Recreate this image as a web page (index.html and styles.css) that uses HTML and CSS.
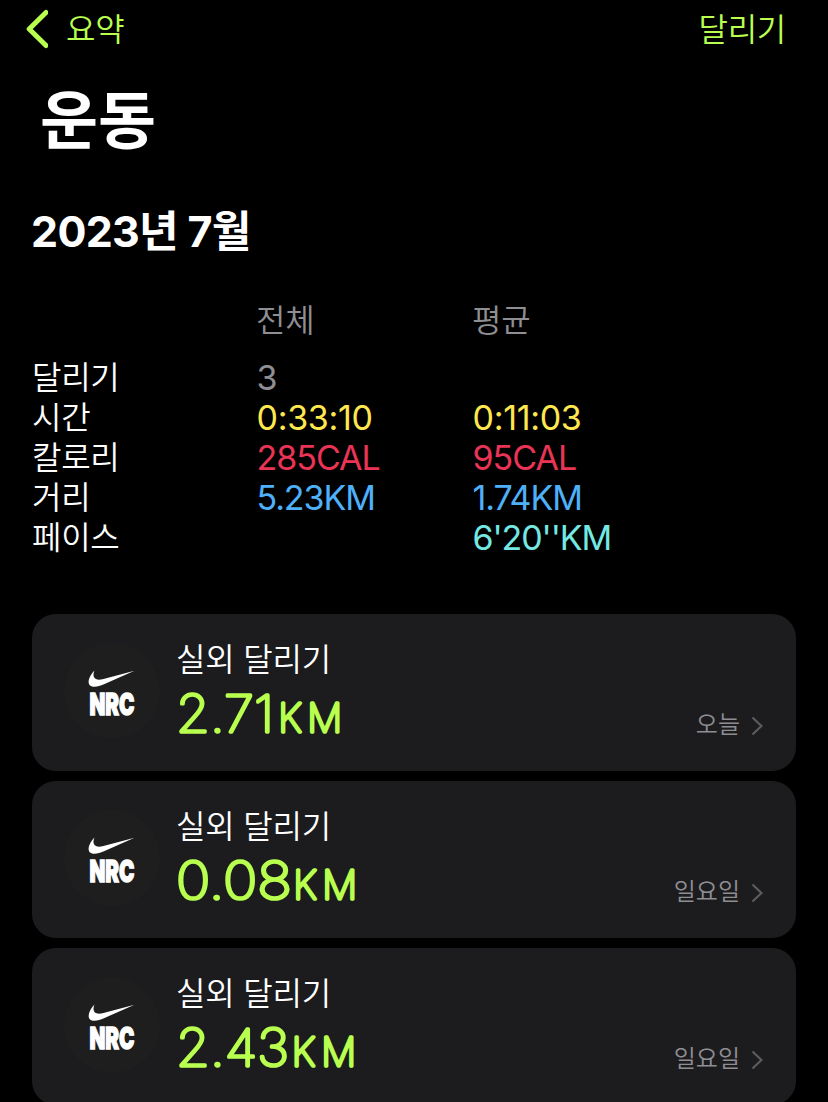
FILE: index.html
```html
<!DOCTYPE html>
<html lang="ko">
<head>
    <meta charset="UTF-8">
    <title>운동</title>
    <link rel="stylesheet" href="styles.css">
</head>
<body>
    <div class="nav">
        <div class="back">
            <svg class="back-icon" width="24" height="40" viewBox="0 0 24 40">
                <path d="M22 3.5 L5.2 20 L22 36.5" />
            </svg>
            <span>요약</span>
        </div>
        <div class="filter">달리기</div>
    </div>

    <h1>운동</h1>
    <h2>2023년 7월</h2>

    <div class="summary">
        <div class="head"></div>
        <div class="head">전체</div>
        <div class="head">평균</div>

        <div class="label">달리기</div>
        <div class="value count">3</div>
        <div class="value"></div>

        <div class="label">시간</div>
        <div class="value time">0:33:10</div>
        <div class="value time">0:11:03</div>

        <div class="label">칼로리</div>
        <div class="value calorie">285CAL</div>
        <div class="value calorie">95CAL</div>

        <div class="label">거리</div>
        <div class="value distance">5.23KM</div>
        <div class="value distance">1.74KM</div>

        <div class="label">페이스</div>
        <div class="value"></div>
        <div class="value pace">6'20''KM</div>
    </div>

    <div class="list">
        <div class="card">
            <svg class="logo" width="96" height="96" viewBox="0 0 96 96">
                <circle cx="48" cy="48" r="48" />
                <path d="M30.5 27.5 C24 34 21.5 43.8 30.5 43.8 C33.5 43.8 36.5 42.5 40 41.2 L70.5 27.8 L38.5 36.2 C31.5 38 27.5 34.5 30.5 27.5 Z" />
                <text x="25.5" y="72" textLength="45" lengthAdjust="spacingAndGlyphs">NRC</text>
            </svg>
            <div class="info">
                <div class="name">실외 달리기</div>
                <svg class="km" width="200" height="72" viewBox="0 0 200 72">
                    <text x="0" y="55.5" textLength="98" lengthAdjust="spacingAndGlyphs">2.71</text>
                    <text class="unit" x="102.2 131.3" y="55.5">KM</text>
                </svg>
            </div>
            <div class="day">
                <span>오늘</span>
                <svg class="arrow" width="12" height="20" viewBox="0 0 12 20"><path d="M1.5 1.5 L10.5 10 L1.5 18.5" /></svg>
            </div>
        </div>

        <div class="card">
            <svg class="logo" width="96" height="96" viewBox="0 0 96 96">
                <circle cx="48" cy="48" r="48" />
                <path d="M30.5 27.5 C24 34 21.5 43.8 30.5 43.8 C33.5 43.8 36.5 42.5 40 41.2 L70.5 27.8 L38.5 36.2 C31.5 38 27.5 34.5 30.5 27.5 Z" />
                <text x="25.5" y="72" textLength="45" lengthAdjust="spacingAndGlyphs">NRC</text>
            </svg>
            <div class="info">
                <div class="name">실외 달리기</div>
                <svg class="km" width="200" height="72" viewBox="0 0 200 72">
                    <text x="0" y="55.5" textLength="116" lengthAdjust="spacingAndGlyphs">0.08</text>
                    <text class="unit" x="117.2 146.3" y="55.5">KM</text>
                </svg>
            </div>
            <div class="day">
                <span>일요일</span>
                <svg class="arrow" width="12" height="20" viewBox="0 0 12 20"><path d="M1.5 1.5 L10.5 10 L1.5 18.5" /></svg>
            </div>
        </div>

        <div class="card">
            <svg class="logo" width="96" height="96" viewBox="0 0 96 96">
                <circle cx="48" cy="48" r="48" />
                <path d="M30.5 27.5 C24 34 21.5 43.8 30.5 43.8 C33.5 43.8 36.5 42.5 40 41.2 L70.5 27.8 L38.5 36.2 C31.5 38 27.5 34.5 30.5 27.5 Z" />
                <text x="25.5" y="72" textLength="45" lengthAdjust="spacingAndGlyphs">NRC</text>
            </svg>
            <div class="info">
                <div class="name">실외 달리기</div>
                <svg class="km" width="200" height="72" viewBox="0 0 200 72">
                    <text x="0" y="55.5" textLength="113" lengthAdjust="spacingAndGlyphs">2.43</text>
                    <text class="unit" x="115.8 145.3" y="55.5">KM</text>
                </svg>
            </div>
            <div class="day">
                <span>일요일</span>
                <svg class="arrow" width="12" height="20" viewBox="0 0 12 20"><path d="M1.5 1.5 L10.5 10 L1.5 18.5" /></svg>
            </div>
        </div>
    </div>
</body>
</html>
```
FILE: styles.css
```css
* {
    box-sizing: border-box;
}
body {
    margin: 0;
    height: 1102px;
    overflow: hidden;
    background-color: #000;
    color: #fff;
    font-family: "Inter", "Noto Sans CJK KR", sans-serif;
    font-weight: 350;
}
.nav {
    display: flex;
    justify-content: space-between;
    height: 58px;
    padding: 0 42px 0 24px;
    color: #b9ff4f;
    font-size: 32px;
    line-height: 60px;
    letter-spacing: -0.3px;
}
.back {
    display: flex;
    gap: 18px;
}
.back-icon {
    margin-top: 9px;
}
.back-icon path {
    fill: none;
    stroke: #b9ff4f;
    stroke-width: 5;
    stroke-linecap: round;
    stroke-linejoin: round;
}
h1 {
    margin: 22px 0 0 40px;
    font-size: 63px;
    font-weight: 700;
    line-height: 80px;
}
h2 {
    margin: 40px 0 0 31px;
    font-size: 43px;
    font-weight: 700;
    line-height: 62px;
    letter-spacing: -0.7px;
}
.summary {
    display: grid;
    grid-template-columns: 225px 216px 1fr;
    grid-template-rows: 57px repeat(5, 40px);
    margin: 38px 32px 0;
    font-size: 34px;
    line-height: 40px;
}
.head, .label {
    font-size: 32px;
    line-height: 41px;
    letter-spacing: -0.3px;
}
.head {
    margin-left: -1px;
    color: #8e8e93;
}
.value {
    margin-left: -0.5px;
    font-weight: 380;
    line-height: 42px;
    letter-spacing: -1px;
    white-space: nowrap;
}
.count {
    color: #8e8e93;
}
.time {
    color: #ffe84f;
    letter-spacing: -0.3px;
}
.calorie {
    color: #ea3456;
}
.distance {
    color: #4fb0fa;
    letter-spacing: -1.1px;
}
.pace {
    color: #74e9e3;
    letter-spacing: -1.1px;
}
.list {
    display: flex;
    flex-direction: column;
    gap: 10px;
    margin: 57px 32px 0;
}
.card {
    display: flex;
    flex-shrink: 0;
    height: 157px;
    padding: 0 33px 0 32px;
    border-radius: 24px;
    background-color: #1c1c1e;
}
.logo {
    margin-top: 29px;
}
.logo circle {
    fill: #1e1e1e;
}
.logo path {
    fill: #fff;
}
.logo text {
    fill: #fff;
    stroke: #fff;
    stroke-width: 1.4;
    font-size: 30px;
    font-weight: 900;
}
.info {
    flex: 1;
    padding: 25px 0 0 16px;
}
.name {
    font-size: 32px;
    line-height: 41px;
    letter-spacing: -0.2px;
}
/* thin weight with a round stroke gives the rounded digits */
.km {
    display: block;
    margin-top: -4px;
    font-size: 51px;
    font-weight: 100;
    fill: #b9ff4f;
    stroke: #b9ff4f;
    stroke-width: 3.3;
    stroke-linejoin: round;
}
.km .unit {
    font-size: 39px;
    font-weight: 120;
    stroke-width: 3.5;
}
.day {
    display: flex;
    gap: 11px;
    margin-top: 94px;
    color: #8e8e93;
    font-size: 24px;
    line-height: 33px;
}
.arrow {
    margin-top: 8px;
}
.arrow path {
    fill: none;
    stroke: #5c5c60;
    stroke-width: 2.2;
}
```
